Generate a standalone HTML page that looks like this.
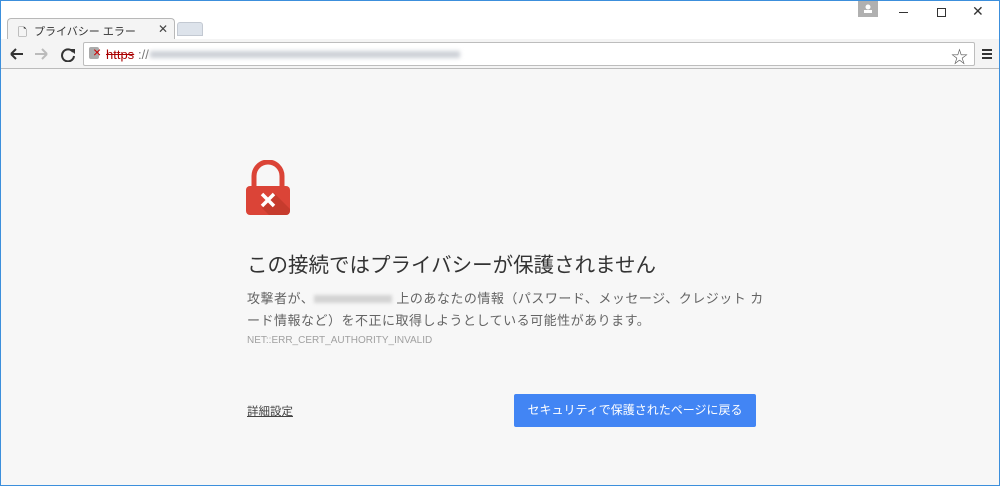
<!DOCTYPE html>
<html><head><meta charset="utf-8"><style>
*{margin:0;padding:0;box-sizing:border-box}
body{width:1000px;height:486px;overflow:hidden;font-family:"Liberation Sans","Noto Sans CJK JP",sans-serif;background:#f7f7f7;position:relative;border:1px solid #3c8fdc;}
.top{position:absolute;left:0;top:0;width:998px;height:38px;background:#fff}
.tab{position:absolute;left:6px;top:17px;width:168px;height:22px;background:#f4f4f4;border:1px solid #b8b8b8;border-bottom:none;border-radius:4px 4px 0 0;font-size:11px;color:#333}
.tab2{position:absolute;left:176px;top:21px;width:26px;height:14px;background:#dde3eb;border:1px solid #c3c9d2;border-radius:3px 3px 0 0}
.tb{position:absolute;left:0;top:38px;width:998px;height:30px;background:#f4f4f4;border-bottom:1px solid #bbb}
.url{position:absolute;left:82px;top:3px;width:892px;height:24px;background:#fff;border:1px solid #bdbdbd;border-radius:2px}
.blur{position:absolute;top:8px;height:7px;background:#ccd0d6;filter:blur(2px)}
.c{position:absolute;left:246px;color:#333}
</style></head><body>
<div class="top">
<div class="tab"><span style="position:absolute;left:10px;top:5px;font-size:11px">🗋</span><span style="position:absolute;left:26px;top:4px">プライバシー エラー</span><span style="position:absolute;left:150px;top:3px;font-size:12px;color:#444">✕</span></div>
<div class="tab2"></div>
<div style="position:absolute;left:857px;top:0;width:20px;height:16px;background:#b0b0b0"><svg width="20" height="16"><circle cx="10" cy="6" r="2.5" fill="#fff"/><rect x="6" y="9" width="8" height="3" fill="#fff"/></svg></div>
<div style="position:absolute;left:898px;top:11px;width:9px;height:1px;background:#333"></div>
<div style="position:absolute;left:936px;top:7px;width:9px;height:9px;border:1px solid #333"></div>
<div style="position:absolute;left:971px;top:2px;font-size:14px;color:#333">✕</div>
</div>
<div class="tb">
<svg style="position:absolute;left:8px;top:7px" width="70" height="16"><path d="M2 8h12M2 8l5-5M2 8l5 5" stroke="#333" stroke-width="2" fill="none"/><path d="M26 8h12M38 8l-5-5M38 8l-5 5" stroke="#bbb" stroke-width="2" fill="none"/><path d="M64 6a6 6 0 1 0 1 4" stroke="#333" stroke-width="2" fill="none"/><path d="M60 3h6v5z" fill="#333"/></svg>
<div class="url">
<span style="position:absolute;left:5px;top:4px;width:10px;height:12px;background:#aaa;border-radius:2px"></span>
<span style="position:absolute;left:9px;top:1px;color:#c00;font-size:14px">×</span>
<span style="position:absolute;left:22px;top:4px;font-size:13px;color:#a00;text-decoration:line-through">https</span><span style="position:absolute;left:54px;top:4px;font-size:13px;color:#777">://</span>
<div class="blur" style="left:66px;width:310px"></div>
<span style="position:absolute;right:6px;top:0px;font-size:17px;color:#555">☆</span>
</div>
<div style="position:absolute;left:981px;top:10px;width:10px;height:2px;background:#333;box-shadow:0 4px #333,0 8px #333"></div>
</div>
<svg style="position:absolute;left:245px;top:159px" width="46" height="56"><path d="M8 28V16a14 14 0 0 1 28 0v12" stroke="#db4437" stroke-width="5" fill="none"/><rect x="0" y="26" width="44" height="29" rx="4" fill="#db4437"/><path d="M28 33l16 16v2a4 4 0 0 1-4 4H23L16 48z" fill="#c1392b" opacity=".8"/><path d="M16 34l12 12M28 34L16 46" stroke="#fff" stroke-width="3.5"/></svg>
<div class="c" style="top:247px;font-size:20.5px;color:#333">この接続ではプライバシーが保護されません</div>
<div class="c" style="top:287px;font-size:13px;line-height:22px;color:#646464;width:600px;letter-spacing:0.5px;white-space:nowrap">攻撃者が、<span style="display:inline-block;width:78px;height:8px;background:#d4d4d4;filter:blur(1.5px)"></span> 上のあなたの情報（パスワード、メッセージ、クレジット カ<br>ード情報など）を不正に取得しようとしている可能性があります。</div>
<div class="c" style="top:334px;font-size:10px;color:#a0a0a0">NET::ERR_CERT_AUTHORITY_INVALID</div>
<div class="c" style="top:402px;font-size:11.5px;color:#444;text-decoration:underline">詳細設定</div>
<div style="position:absolute;left:513px;top:393px;width:242px;height:33px;background:#4285f4;border-radius:2px;color:#fff;font-size:12px;text-align:center;line-height:33px">セキュリティで保護されたページに戻る</div>
</body></html>
